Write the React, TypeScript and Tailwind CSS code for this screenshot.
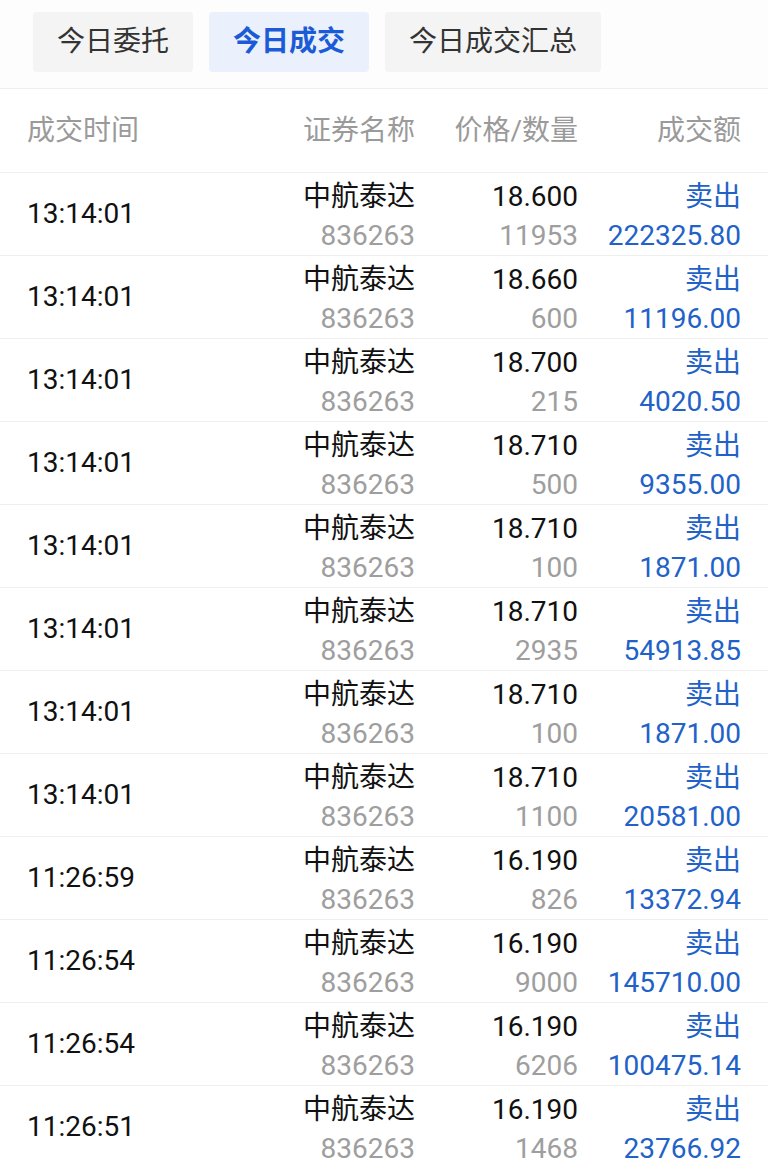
import React from 'react';

// ─── Today's trades list ─────────────────────────────────────────────────────
type Trade = { time: string; price: string; qty: string; amount: string };

const trades: Trade[] = [
  { time: '13:14:01', price: '18.600', qty: '11953', amount: '222325.80' },
  { time: '13:14:01', price: '18.660', qty: '600', amount: '11196.00' },
  { time: '13:14:01', price: '18.700', qty: '215', amount: '4020.50' },
  { time: '13:14:01', price: '18.710', qty: '500', amount: '9355.00' },
  { time: '13:14:01', price: '18.710', qty: '100', amount: '1871.00' },
  { time: '13:14:01', price: '18.710', qty: '2935', amount: '54913.85' },
  { time: '13:14:01', price: '18.710', qty: '100', amount: '1871.00' },
  { time: '13:14:01', price: '18.710', qty: '1100', amount: '20581.00' },
  { time: '11:26:59', price: '16.190', qty: '826', amount: '13372.94' },
  { time: '11:26:54', price: '16.190', qty: '9000', amount: '145710.00' },
  { time: '11:26:54', price: '16.190', qty: '6206', amount: '100475.14' },
  { time: '11:26:51', price: '16.190', qty: '1468', amount: '23766.92' },
];

const tabs = ['今日委托', '今日成交', '今日成交汇总'];

function TradeRow({ t }: { t: Trade }) {
  return (
    <div className="h-[83px] flex items-center pl-[27px] border-b border-[#efefef] overflow-hidden">
      <div className="w-[240px] text-[28px] text-[#111]">{t.time}</div>
      <div className="w-[148px] text-right self-start pt-[4px]">
        <div className="leading-[40px] text-[#111]">中航泰达</div>
        <div className="leading-[38px] text-[#9e9e9e]">836263</div>
      </div>
      <div className="w-[163px] text-right self-start pt-[4px]">
        <div className="leading-[40px] text-[#111]">{t.price}</div>
        <div className="leading-[38px] text-[#9e9e9e]">{t.qty}</div>
      </div>
      <div className="w-[163px] text-right self-start pt-[4px] text-[#2262c8]">
        <div className="leading-[40px]">卖出</div>
        <div className="leading-[38px]">{t.amount}</div>
      </div>
    </div>
  );
}

export default function App() {
  return (
    <div
      className="w-[768px] h-[1168px] bg-white overflow-hidden text-[28px]"
      style={{ fontFamily: 'Roboto, "Noto Sans CJK SC", sans-serif' }}
    >
      {/* ── Tabs ── */}
      <div className="h-[89px] flex items-start gap-4 pl-[33px] pt-[12px] border-b border-[#efefef] bg-[#fdfdfd]">
        {tabs.map((label, i) => (
          <div
            key={label}
            className={
              i === 1
                ? 'h-[60px] px-6 flex items-center rounded bg-[#eaf0fc] text-[#1b5bd6] font-bold'
                : 'h-[60px] px-6 flex items-center rounded bg-[#f4f4f4] text-[#333]'
            }
          >
            {label}
          </div>
        ))}
      </div>

      {/* ── Header ── */}
      <div className="h-[84px] flex items-center pl-[27px] border-b border-[#efefef] text-[#9a9a9a]">
        <div className="w-[240px]">成交时间</div>
        <div className="w-[148px] text-right">证券名称</div>
        <div className="w-[163px] text-right">价格/数量</div>
        <div className="w-[163px] text-right">成交额</div>
      </div>

      {/* ── Rows ── */}
      {trades.map((t, i) => (
        <TradeRow key={i} t={t} />
      ))}
    </div>
  );
}
